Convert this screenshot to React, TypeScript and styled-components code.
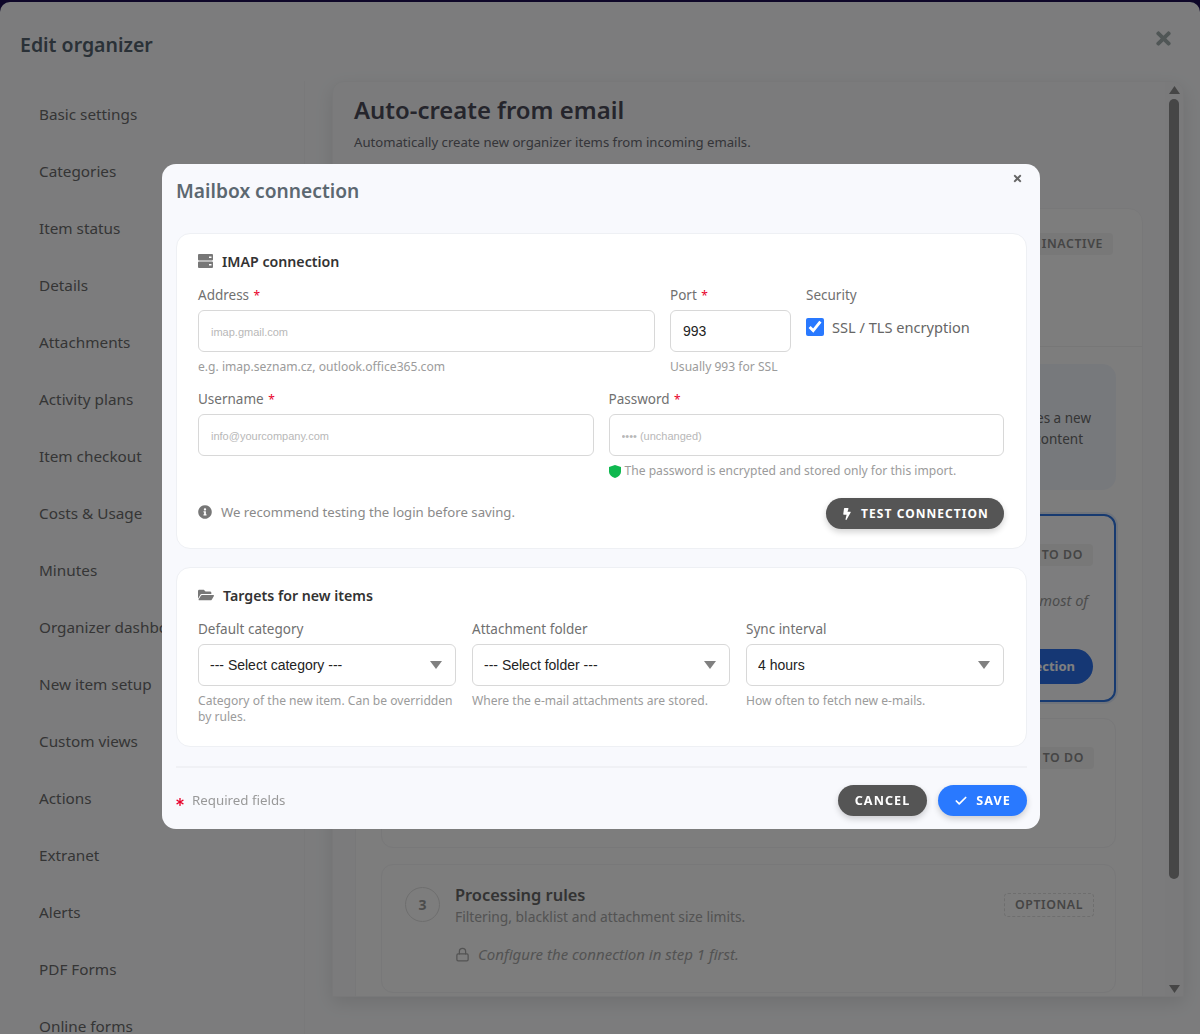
import React from "react";
import styled, { createGlobalStyle } from "styled-components";
import { FaFolderOpen, FaBolt, FaInfoCircle, FaAsterisk, FaTimes } from "react-icons/fa";
import { Lock, Check as CheckMark } from "lucide-react";

const Global = createGlobalStyle`
  html, body { margin: 0; padding: 0; background: #1c0f52; }
  * { box-sizing: border-box; }
  body { font-family: "Noto Sans", "Open Sans", sans-serif; }
  #root { height: 1034px; overflow: hidden; }
`;

const Shell = styled.div`
  height: 1032px; margin-top: 2px; background: #f8f9fb;
  border-radius: 10px 10px 0 0; overflow: hidden; position: relative;
`;
const ShellHeader = styled.header`
  height: 79px; padding: 30px 28px 0 20px; display: flex; justify-content: space-between; align-items: flex-start;
`;
const ShellTitle = styled.h1`
  margin: 0; font-size: 19.5px; line-height: 26px; font-weight: 600; color: #55636e;
`;
const ShellClose = styled.span`
  color: #a0acac; font-size: 21px; line-height: 1; display: flex; margin: -4px -2px 0 0;
`;
const ShellBody = styled.div`display: flex;`;
const Sidebar = styled.nav`
  width: 305px; padding: 5px 0 0 39px; border-right: 1px solid #f3f3f5; flex: none; height: 960px;
`;
const SideItem = styled.div`
  height: 57px; line-height: 57px; font-size: 15.3px; color: #6b6b6b; white-space: nowrap; margin-top: 0;
`;
const Panel = styled.section`
  margin-left: 27px; width: 852px; height: 916px; display: flex; background: #f6f7f9;
  border: 1px solid #f0f1f3; border-radius: 12px 12px 0 0; overflow: hidden;
  box-shadow: 0 6px 18px rgba(0,0,0,.1); flex: none;
`;
const PanelMain = styled.div`flex: 1; min-width: 0; padding: 11px 22px 0 22px;`;
const PanelTitle = styled.h2`
  margin: 0 0 0 -1px; font-size: 23.9px; line-height: 34px; font-weight: 600; color: #4b4b58;
`;
const PanelSub = styled.p`
  margin: 5px 0 0 -1px; font-size: 13.15px; line-height: 20px; color: #6a6a72;
`;
const Inner = styled.div`
  margin-top: 56px; background: #fafafa; border: 1px solid #f1f1f3; border-radius: 14px; height: 900px;
`;
const InnerHead = styled.div`
  height: 138px; border-bottom: 1px solid #eee; padding: 24px 29px 0 0; display: flex; justify-content: flex-end; align-items: flex-start;
`;
const Badge = styled.span<{ $dashed?: boolean }>`
  font-size: 12.3px; font-weight: 600; letter-spacing: .6px; color: #8a8a8a; line-height: 22px; padding: 0 10px;
  border-radius: 4px; background: ${p => p.$dashed ? "transparent" : "#f0f0f0"};
  border: ${p => p.$dashed ? "1px dashed #ddd" : "none"};
  flex: none;
`;
const InnerBody = styled.div`padding: 17px 26px 0 25px; display: flex; flex-direction: column;`;
const InfoBox = styled.div`
  height: 126px; background: #eef2f9; border-radius: 14px; padding: 44px 25px 0 0; margin-bottom: 24px;
  font-size: 13.5px; line-height: 21px; color: #6a6a6a; text-align: right;
`;
const InfoLine = styled.div<{ $inset?: number }>`margin-right: ${p => p.$inset ?? 0}px;`;
const Step = styled.article<{ $active?: boolean; $h: number }>`
  height: ${p => p.$h}px; margin-bottom: 16px; border-radius: 12px; padding: 22px 21px 0 23px;
  border: ${p => p.$active ? "2px solid #2f74e0" : "1px solid #f0f0f2"};
  background: ${p => p.$active ? "#fafbfd" : "#fafafa"};
  box-shadow: ${p => p.$active ? "0 0 0 2px rgba(47,116,224,.12)" : "none"};
`;
const StepRow = styled.div`display: flex; align-items: flex-start;`;
const StepCircle = styled.span`
  width: 35px; height: 35px; border-radius: 50%; border: 1px solid #ddd; display: flex; align-items: center; justify-content: center;
  font-size: 14px; font-weight: 700; color: #999; flex: none; margin-right: 15px;
`;
const StepText = styled.div`flex: 1; min-width: 0; margin-top: -2px;`;
const StepName = styled.div`font-size: 16.4px; line-height: 19px; font-weight: 600; color: #666;`;
const StepDesc = styled.div`font-size: 13.8px; line-height: 19px; color: #a6a6a6; margin-top: 3px;`;
const StepBadge = styled(Badge)`margin-top: 6px;`;
const StepNote = styled.div`
  display: flex; align-items: center; gap: 8px; margin: 18px 0 0 50px; font-size: 15px; font-style: italic; color: #a6a6a6; line-height: 20px;
`;
const StepNoteRight = styled.div`
  margin-top: 17px; padding-right: 5px; text-align: right; font-size: 14.6px; font-style: italic; color: #999; line-height: 20px;
`;
const StepAction = styled.div`display: flex; justify-content: flex-end; margin-top: 39px;`;
const StepButton = styled.span`
  height: 35px; line-height: 35px; padding: 0 18px; border-radius: 18px; background: #2a6fe8; color: #fff; font-size: 13px; font-weight: 700;
`;

const ScrollTrack = styled.div`
  width: 18px; flex: none; display: flex; flex-direction: column; align-items: center; padding: 4px 0 3px;
  height: 100%; background: #f4f5f7;
`;
const ScrollThumb = styled.div`
  width: 10px; height: 780px; border-radius: 5px; background: #8c8c8c; margin-top: 5px;
`;
const ScrollSpacer = styled.div`flex: 1;`;

const Overlay = styled.div`
  position: fixed; inset: 0; background: rgba(0,0,0,.5); padding: 164px 0 0 162px;
`;
const Dialog = styled.div`
  width: 878px; height: 665px; background: #f8f9fd; border-radius: 14px; padding: 14px 13px 0 14px;
  display: flex; flex-direction: column; position: relative;
`;
const DialogClose = styled.span`
  position: absolute; top: 9px; right: 17px; color: #666; font-size: 11px; display: flex;
`;
const DialogTitle = styled.h3`
  margin: 0 0 29px; font-size: 19.2px; line-height: 26px; font-weight: 600; color: #5c6871; height: 26px;
`;
const Card = styled.section<{ $h: number }>`
  height: ${p => p.$h}px; background: #fff; border: 1px solid #eef0f4; border-radius: 14px; padding: 16px 22px 0 21px; margin-bottom: 18px;
`;
const CardHead = styled.div`
  display: flex; align-items: center; height: 22px; font-size: 14.2px; font-weight: 600; color: #333; margin-bottom: 12px;
`;
const CardIcon = styled.span<{ $gap: number }>`
  display: flex; color: #777; font-size: 16px; margin-right: ${p => p.$gap}px;
`;
const Grid = styled.div<{ $cols: string; $gap: number }>`
  display: grid; grid-template-columns: ${p => p.$cols}; column-gap: ${p => p.$gap}px;
`;
const Field = styled.div<{ $h?: number }>`min-height: ${p => p.$h ?? 0}px; min-width: 0;`;
const Label = styled.label`
  display: block; font-size: 13.5px; line-height: 22px; height: 22px; color: #707070; margin-bottom: 4px;
`;
const Req = styled.span`color: #e8002a; margin-left: 1px; font-size: 12px;`;
const Input = styled.input`
  display: block; width: 100%; height: 42px; border: 1.5px solid #d8d8d8; border-radius: 6px; padding: 0 12px; outline: none; background: #fff;
  font-family: "Liberation Sans", Arial, sans-serif; font-size: 14px; color: #222;
  &::placeholder { font-size: 11px; color: #b8b8b8; opacity: 1; }
`;
const Hint = styled.div`
  margin-top: 7px; font-size: 12.1px; line-height: 16px; color: #9b9b9b;
`;
const ShieldHint = styled(Hint)`display: flex; align-items: center; gap: 4px; white-space: nowrap; margin-top: 7px;`;
const CheckRow = styled.label`
  display: flex; align-items: center; gap: 8px; height: 18px; margin-top: 12px; font-size: 14.6px; color: #666; white-space: nowrap;
`;
const Check = styled.input`
  width: 18px; height: 18px; margin: 0; accent-color: #2979ff;
`;
const ActionRow = styled.div`
  display: flex; align-items: center; justify-content: space-between; margin-top: 19px; height: 31px;
`;
const InfoNote = styled.div`
  display: flex; align-items: center; gap: 9px; font-size: 13.2px; color: #8a8a8a; margin-bottom: 3px;
`;
const InfoIcon = styled.span`display: flex; color: #777; font-size: 14px;`;
const Pill = styled.button<{ $blue?: boolean; $w: number; $fs?: number }>`
  width: ${p => p.$w}px; height: 31px; border: none; border-radius: 16px; padding: 0; display: flex; align-items: center; justify-content: center; gap: 8px;
  background: ${p => p.$blue ? "#2979ff" : "#555"}; color: #fff;
  font-family: inherit; font-size: ${p => p.$fs ?? 12}px; font-weight: 700; letter-spacing: 1.05px; text-transform: uppercase;
  box-shadow: 0 3px 6px rgba(0,0,0,.18);
`;
const SelectWrap = styled.div`position: relative;`;
const Select = styled.select`
  display: block; width: 100%; height: 42px; appearance: none; border: 1.5px solid #d8d8d8; border-radius: 6px; padding: 0 11px; outline: none;
  background: #fff; font-family: "Liberation Sans", Arial, sans-serif; font-size: 14px; color: #222;
`;
const Arrow = styled.svg`position: absolute; right: 14px; top: 17px; width: 12px; height: 8px;`;
const Rule = styled.div`height: 2px; background: #f0f1f5; margin-top: 1px;`;
const Footer = styled.footer`
  display: flex; align-items: center; justify-content: space-between; margin-top: 17px; height: 31px;
`;
const Required = styled.div`
  display: flex; align-items: center; gap: 8px; font-size: 13.3px; color: #999; margin-bottom: 1px;
`;
const RedStar = styled.span`display: flex; color: #e8002a; font-size: 8px; margin-top: 4px;`;
const Buttons = styled.div`display: flex; gap: 11px;`;

const items = ["Basic settings","Categories","Item status","Details","Attachments","Activity plans","Item checkout","Costs & Usage","Minutes","Organizer dashboard","New item setup","Custom views","Actions","Extranet","Alerts","PDF Forms","Online forms"];

const Caret = () => (
  <Arrow viewBox="0 0 12 8"><path d="M0 0h12L6 8z" fill="#808080" /></Arrow>
);

const ServerIcon = () => (
  <svg width="15" height="14" viewBox="0 0 15 14">
    <path fillRule="evenodd" fill="#777" d="M1 0h13a1 1 0 0 1 1 1v4.500a1 1 0 0 1-1 1H1a1 1 0 0 1-1-1V1a1 1 0 0 1 1-1zm10 2.500v1.500h2.500V2.500zM1 7.500h13a1 1 0 0 1 1 1V13a1 1 0 0 1-1 1H1a1 1 0 0 1-1-1V8.500a1 1 0 0 1 1-1zm10 2.500v1.500h2.500V10z" />
  </svg>
);

const ShieldIcon = () => (
  <svg width="12" height="13" viewBox="0 0 12 13">
    <path fill="#0fb84f" d="M6 0l6 2v4.500c0 3-2.500 5.500-6 6.500-3.500-1-6-3.500-6-6.500V2z" />
  </svg>
);

export default function App() {
  return (
    <>
      <Global />
      <Shell>
        <ShellHeader>
          <ShellTitle>Edit organizer</ShellTitle>
          <ShellClose><FaTimes /></ShellClose>
        </ShellHeader>
        <ShellBody>
          <Sidebar>
            {items.map(i => <SideItem key={i}>{i}</SideItem>)}
          </Sidebar>
          <Panel>
            <PanelMain>
              <PanelTitle>Auto-create from email</PanelTitle>
              <PanelSub>Automatically create new organizer items from incoming emails.</PanelSub>
              <Inner>
                <InnerHead><Badge>INACTIVE</Badge></InnerHead>
                <InnerBody>
                  <InfoBox>
                    <InfoLine>Every incoming email creates a new</InfoLine>
                    <InfoLine $inset={8}>organizer item from its content</InfoLine>
                  </InfoBox>
                  <Step $active $h={188}>
                    <StepRow>
                      <StepCircle>1</StepCircle>
                      <StepText><StepName>Mailbox connection</StepName></StepText>
                      <StepBadge>TO DO</StepBadge>
                    </StepRow>
                    <StepNoteRight>Start with the connection, it does most of</StepNoteRight>
                    <StepAction><StepButton>Set up connection</StepButton></StepAction>
                  </Step>
                  <Step $h={130}>
                    <StepRow>
                      <StepCircle>2</StepCircle>
                      <StepText><StepName>Rules</StepName></StepText>
                      <StepBadge>TO DO</StepBadge>
                    </StepRow>
                  </Step>
                  <Step $h={129}>
                    <StepRow>
                      <StepCircle>3</StepCircle>
                      <StepText>
                        <StepName>Processing rules</StepName>
                        <StepDesc>Filtering, blacklist and attachment size limits.</StepDesc>
                      </StepText>
                      <StepBadge $dashed>OPTIONAL</StepBadge>
                    </StepRow>
                    <StepNote><Lock size={15} />Configure the connection in step 1 first.</StepNote>
                  </Step>
                </InnerBody>
              </Inner>
            </PanelMain>
            <ScrollTrack>
              <svg width="11" height="8" viewBox="0 0 11 8"><path d="M0 8h11L5.500 0z" fill="#8c8c8c" /></svg>
              <ScrollThumb />
              <ScrollSpacer />
              <svg width="11" height="8" viewBox="0 0 11 8"><path d="M0 0h11L5.500 8z" fill="#8c8c8c" /></svg>
            </ScrollTrack>
          </Panel>
        </ShellBody>
      </Shell>
      <Overlay>
        <Dialog>
          <DialogClose><FaTimes /></DialogClose>
          <DialogTitle>Mailbox connection</DialogTitle>
          <Card $h={316}>
            <CardHead><CardIcon $gap={9}><ServerIcon /></CardIcon>IMAP connection</CardHead>
            <Grid $cols="457px 121px 1fr" $gap={15}>
              <Field $h={104}>
                <Label>Address <Req>*</Req></Label>
                <Input placeholder="imap.gmail.com" />
                <Hint>e.g. imap.seznam.cz, outlook.office365.com</Hint>
              </Field>
              <Field>
                <Label>Port <Req>*</Req></Label>
                <Input defaultValue="993" />
                <Hint>Usually 993 for SSL</Hint>
              </Field>
              <Field>
                <Label>Security</Label>
                <CheckRow><Check type="checkbox" defaultChecked />SSL / TLS encryption</CheckRow>
              </Field>
            </Grid>
            <Grid $cols="1fr 1fr" $gap={15}>
              <Field>
                <Label>Username <Req>*</Req></Label>
                <Input placeholder="info@yourcompany.com" />
              </Field>
              <Field>
                <Label>Password <Req>*</Req></Label>
                <Input placeholder="•••• (unchanged)" />
                <ShieldHint><ShieldIcon />The password is encrypted and stored only for this import.</ShieldHint>
              </Field>
            </Grid>
            <ActionRow>
              <InfoNote><InfoIcon><FaInfoCircle /></InfoIcon>We recommend testing the login before saving.</InfoNote>
              <Pill $w={178}><FaBolt />Test connection</Pill>
            </ActionRow>
          </Card>
          <Card $h={180}>
            <CardHead><CardIcon $gap={9}><FaFolderOpen /></CardIcon>Targets for new items</CardHead>
            <Grid $cols="1fr 1fr 1fr" $gap={16}>
              <Field>
                <Label>Default category</Label>
                <SelectWrap>
                  <Select><option>--- Select category ---</option></Select>
                  <Caret />
                </SelectWrap>
                <Hint>Category of the new item. Can be overridden by rules.</Hint>
              </Field>
              <Field>
                <Label>Attachment folder</Label>
                <SelectWrap>
                  <Select><option>--- Select folder ---</option></Select>
                  <Caret />
                </SelectWrap>
                <Hint>Where the e-mail attachments are stored.</Hint>
              </Field>
              <Field>
                <Label>Sync interval</Label>
                <SelectWrap>
                  <Select><option>4 hours</option></Select>
                  <Caret />
                </SelectWrap>
                <Hint>How often to fetch new e-mails.</Hint>
              </Field>
            </Grid>
          </Card>
          <Rule />
          <Footer>
            <Required><RedStar><FaAsterisk /></RedStar>Required fields</Required>
            <Buttons>
              <Pill $w={89} $fs={12.6}>Cancel</Pill>
              <Pill $blue $w={89} $fs={12.6}><CheckMark size={14} strokeWidth={3} />Save</Pill>
            </Buttons>
          </Footer>
        </Dialog>
      </Overlay>
    </>
  );
}
